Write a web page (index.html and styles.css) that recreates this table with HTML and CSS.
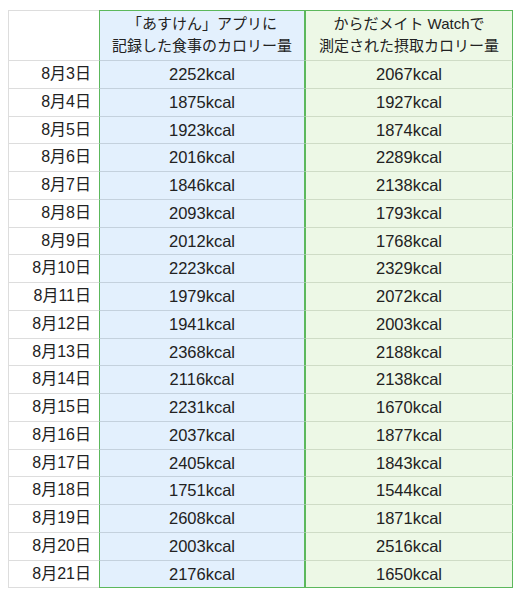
FILE: index.html
```html
<!DOCTYPE html>
<html lang="ja">
<head>
<meta charset="utf-8">
<link rel="stylesheet" href="styles.css">
</head>
<body>
<table class="cal">
<colgroup><col class="c-date"><col class="c-app"><col class="c-watch"></colgroup>
<thead>
<tr><th class="date"></th><th class="app">「あすけん」アプリに<br>記録した食事のカロリー量</th><th class="watch">からだメイト Watchで<br>測定された摂取カロリー量</th></tr>
</thead>
<tbody>
<tr><td class="date">8月3日</td><td class="app">2252kcal</td><td class="watch">2067kcal</td></tr>
<tr><td class="date">8月4日</td><td class="app">1875kcal</td><td class="watch">1927kcal</td></tr>
<tr><td class="date">8月5日</td><td class="app">1923kcal</td><td class="watch">1874kcal</td></tr>
<tr><td class="date">8月6日</td><td class="app">2016kcal</td><td class="watch">2289kcal</td></tr>
<tr><td class="date">8月7日</td><td class="app">1846kcal</td><td class="watch">2138kcal</td></tr>
<tr><td class="date">8月8日</td><td class="app">2093kcal</td><td class="watch">1793kcal</td></tr>
<tr><td class="date">8月9日</td><td class="app">2012kcal</td><td class="watch">1768kcal</td></tr>
<tr><td class="date">8月10日</td><td class="app">2223kcal</td><td class="watch">2329kcal</td></tr>
<tr><td class="date">8月11日</td><td class="app">1979kcal</td><td class="watch">2072kcal</td></tr>
<tr><td class="date">8月12日</td><td class="app">1941kcal</td><td class="watch">2003kcal</td></tr>
<tr><td class="date">8月13日</td><td class="app">2368kcal</td><td class="watch">2188kcal</td></tr>
<tr><td class="date">8月14日</td><td class="app">2116kcal</td><td class="watch">2138kcal</td></tr>
<tr><td class="date">8月15日</td><td class="app">2231kcal</td><td class="watch">1670kcal</td></tr>
<tr><td class="date">8月16日</td><td class="app">2037kcal</td><td class="watch">1877kcal</td></tr>
<tr><td class="date">8月17日</td><td class="app">2405kcal</td><td class="watch">1843kcal</td></tr>
<tr><td class="date">8月18日</td><td class="app">1751kcal</td><td class="watch">1544kcal</td></tr>
<tr><td class="date">8月19日</td><td class="app">2608kcal</td><td class="watch">1871kcal</td></tr>
<tr><td class="date">8月20日</td><td class="app">2003kcal</td><td class="watch">2516kcal</td></tr>
<tr><td class="date">8月21日</td><td class="app">2176kcal</td><td class="watch">1650kcal</td></tr>
</tbody>
</table>
</body>
</html>
```
FILE: styles.css
```css
html, body {
  margin: 0;
  padding: 0;
  background: #ffffff;
}
body {
  padding: 10px 0 0 8px;
  font-family: "Liberation Sans", "Noto Sans CJK JP", sans-serif;
  color: #222222;
}
.cal {
  border-collapse: separate;
  border-spacing: 0;
  table-layout: fixed;
  width: 505px;
}
.c-date { width: 91px; }
.c-app { width: 206px; }
.c-watch { width: 208px; }

.cal th, .cal td {
  padding: 0;
  border-bottom: 1px solid #dddddd;
  font-weight: normal;
}
.cal th {
  padding: 2px 0 3px;
  line-height: 22px;
  font-size: 15px;
  text-align: center;
  border-top: 1px solid #dddddd;
}
.cal td {
  line-height: 26.75px;
  text-align: center;
  font-size: 16.5px;
}
.cal td.date {
  text-align: right;
  padding-right: 8px;
  font-size: 16px;
}
.cal .date {
  border-left: 1px solid #dddddd;
}
.cal .app {
  background: #e3f0fd;
  border-left: 1px solid #5cb85c;
  border-right: 1px solid #5cb85c;
  border-bottom-color: #c4d1dd;
}
.cal .watch {
  background: #edf8e6;
  border-left: 1px solid #5cb85c;
  border-right: 1px solid #5cb85c;
  border-bottom-color: #cfdcc6;
}
.cal th.app, .cal th.watch {
  border-top-color: #5cb85c;
}
.cal tbody tr:last-child .app,
.cal tbody tr:last-child .watch {
  border-bottom-color: #5cb85c;
}
```
